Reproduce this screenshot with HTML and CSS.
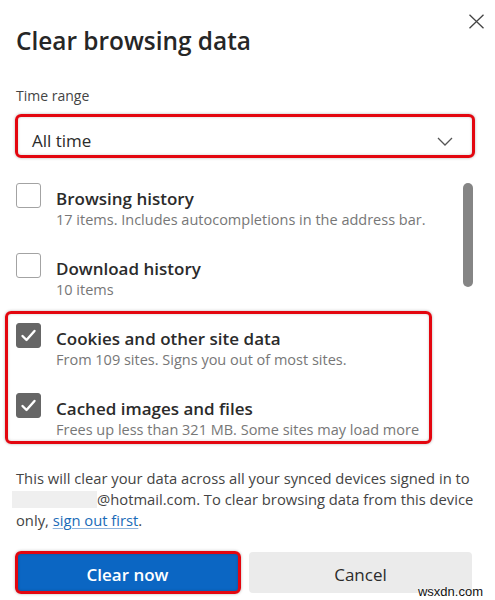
FILE: index.html
```html
<!DOCTYPE html>
<html lang="en">
<head>
<meta charset="utf-8">
<title>Clear browsing data</title>
<link rel="stylesheet" href="styles.css">
</head>
<body>
<div class="page">
  <div class="dialog">
    <div class="header">
      <h1 class="title">Clear browsing data</h1>
      <button class="close" aria-label="Close">
        <svg width="17" height="15" viewBox="0 0 17 15"><path d="M1.5 0.8 L15.5 14.2 M15.5 0.8 L1.5 14.2" stroke="#444" stroke-width="1.3" fill="none"/></svg>
      </button>
    </div>

    <div class="label">Time range</div>
    <div class="select">
      <span class="select-value">All time</span>
      <svg class="chevron" width="16" height="9" viewBox="0 0 16 9"><path d="M1 1 L8 8 L15 1" stroke="#555" stroke-width="1.3" fill="none"/></svg>
    </div>

    <div class="list">
      <div class="scroller">
        <div class="row">
          <span class="box"></span>
          <div class="text">
            <div class="row-title">Browsing history</div>
            <div class="row-desc">17 items. Includes autocompletions in the address bar.</div>
          </div>
        </div>
        <div class="row">
          <span class="box"></span>
          <div class="text">
            <div class="row-title">Download history</div>
            <div class="row-desc">10 items</div>
          </div>
        </div>
        <div class="row">
          <span class="box checked"><svg width="23" height="23" viewBox="0 0 23 23"><path d="M5.5 12 L9.5 16 L17.5 7" stroke="#fff" stroke-width="2.4" fill="none" stroke-linecap="round" stroke-linejoin="round"/></svg></span>
          <div class="text">
            <div class="row-title">Cookies and other site data</div>
            <div class="row-desc">From 109 sites. Signs you out of most sites.</div>
          </div>
        </div>
        <div class="row">
          <span class="box checked"><svg width="23" height="23" viewBox="0 0 23 23"><path d="M5.5 12 L9.5 16 L17.5 7" stroke="#fff" stroke-width="2.4" fill="none" stroke-linecap="round" stroke-linejoin="round"/></svg></span>
          <div class="text">
            <div class="row-title">Cached images and files</div>
            <div class="row-desc">Frees up less than 321 MB. Some sites may load more</div>
          </div>
        </div>
      </div>
      <div class="scrollbar"></div>
      <div class="mark mark-list"></div>
    </div>

    <p class="note">This will clear your data across all your synced devices signed in to <span class="redacted"></span>@hotmail.com. To clear browsing data from this device only, <a class="link" href="#">sign out first</a>.</p>

    <div class="actions">
      <button class="btn btn-primary">Clear now</button>
      <button class="btn btn-secondary">Cancel</button>
    </div>
  </div>
  <div class="watermark">wsxdn.com</div>
</div>
</body>
</html>
```

FILE: styles.css
```css
html, body {
  margin: 0;
  padding: 0;
  background: #fff;
}

body {
  font-family: "Open Sans", "Noto Sans", sans-serif;
  color: #2b2b2b;
}

.page {
  position: relative;
  width: 495px;
  height: 600px;
  overflow: hidden;
}

.dialog {
  padding: 14px 20px 0 16px;
}

.header {
  display: flex;
  justify-content: space-between;
  align-items: flex-start;
}

.title {
  margin: 11px 0 0;
  font-size: 24.4px;
  font-weight: 600;
  line-height: 32px;
  color: #262626;
}

.close {
  margin-right: -10px;
  width: 17px;
  height: 15px;
  padding: 0;
  border: 0;
  background: none;
  display: flex;
}

.label {
  margin-top: 29px;
  font-size: 14px;
  line-height: 20px;
  color: #444;
}

.select {
  position: relative;
  margin-top: 9px;
  height: 42px;
  box-sizing: border-box;
  border: 1px solid #d2d2d2;
  border-radius: 4px;
  display: flex;
  align-items: center;
  justify-content: space-between;
  padding: 10px 21px 0 15px;
}

.select::after {
  content: "";
  position: absolute;
  inset: -2px -1px -2px -2px;
  border: 3px solid #e3060f;
  border-radius: 6px;
  box-shadow: 0 0 3px rgba(0, 0, 0, 0.3), inset 0 0 3px rgba(0, 0, 0, 0.2);
}

.select-value {
  font-size: 17px;
  line-height: 22px;
  color: #2b2b2b;
}

.list {
  position: relative;
  margin-top: 20px;
  height: 267px;
  display: flex;
}

.scroller {
  flex: 1;
  min-width: 0;
  overflow: hidden;
  padding-top: 6px;
}

.scrollbar {
  flex: none;
  width: 10px;
  height: 104px;
  margin: 6px 2px 0 8px;
  background: #858585;
  border-radius: 5px;
}

.row {
  display: flex;
  gap: 15px;
  height: 70px;
}

.box {
  flex: none;
  width: 25px;
  height: 25px;
  box-sizing: border-box;
  border: 1px solid #a3a3a3;
  border-radius: 3px;
  background: #fff;
  display: flex;
  align-items: center;
  justify-content: center;
}

.box.checked {
  background: #666;
  border-color: #666;
}

.text {
  padding-top: 4px;
}

.row-title {
  font-size: 17px;
  font-weight: 600;
  line-height: 23px;
  color: #2b2b2b;
}

.row-desc {
  font-size: 14.5px;
  line-height: 20px;
  color: #777;
  white-space: nowrap;
}

.mark {
  position: absolute;
  box-sizing: border-box;
  border: 3px solid #e3060f;
  border-radius: 6px;
  box-shadow: 0 0 3px rgba(0, 0, 0, 0.3), inset 0 0 3px rgba(0, 0, 0, 0.2);
  pointer-events: none;
}

.mark-list {
  left: -11px;
  top: 134px;
  width: 427px;
  height: 133px;
}

.note {
  margin: 24px 0 0;
  font-size: 14.75px;
  line-height: 21px;
  color: #444;
}

.redacted {
  display: inline-block;
  width: 85px;
  height: 17px;
  margin-left: -4px;
  vertical-align: -3px;
  background: #efefef;
}

.link {
  color: #1a6bb8;
  text-decoration: underline;
  text-decoration-color: #8fb4dc;
  text-underline-offset: 2px;
}

.actions {
  display: flex;
  gap: 10px;
  margin-top: 21px;
  padding-right: 3px;
}

.btn {
  flex: 1;
  height: 41px;
  border: 0;
  border-radius: 4px;
  font-family: "Open Sans", "Noto Sans", sans-serif;
  font-size: 17px;
  line-height: 22px;
  padding: 4px 0 0;
}

.btn-primary {
  position: relative;
  background: #0b66c3;
  color: #fff;
  font-weight: 600;
}

.btn-primary::after {
  content: "";
  position: absolute;
  inset: -1px -2px -1px -1px;
  border: 3px solid #e3060f;
  border-radius: 6px;
  box-shadow: 0 0 3px rgba(0, 0, 0, 0.3), inset 0 0 3px rgba(0, 0, 0, 0.2);
}

.btn-secondary {
  background: #ebebeb;
  color: #2b2b2b;
}

.watermark {
  position: absolute;
  right: 12px;
  top: 584px;
  font-family: "Liberation Sans", sans-serif;
  font-size: 13px;
  line-height: 15px;
  color: #111;
  text-shadow: 0 0 2px #fff, 0 0 2px #fff;
}
```
